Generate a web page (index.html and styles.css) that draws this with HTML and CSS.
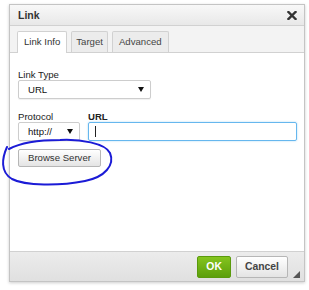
FILE: index.html
```html
<!DOCTYPE html>
<html lang="en">
<head>
    <meta charset="UTF-8">
    <meta name="viewport" content="width=device-width, initial-scale=1.0">
    <title>Link</title>
    <link rel="stylesheet" href="styles.css">
</head>
<body>
    <div class="dialog">
        <div class="dialog-title">
            <span>Link</span>
            <svg class="close" width="10" height="9" viewBox="0 0 10 9">
                <path d="M1.5 1 L8.5 8 M8.5 1 L1.5 8" stroke="#333" stroke-width="2.4" stroke-linecap="square"/>
            </svg>
        </div>

        <div class="tabs">
            <div class="tab active">Link Info</div>
            <div class="tab tab-narrow">Target</div>
            <div class="tab">Advanced</div>
        </div>

        <div class="dialog-body">
            <div class="label">Link Type</div>
            <div class="select select-type">
                <span>URL</span>
                <span class="arrow"></span>
            </div>

            <div class="url-row">
                <div class="field">
                    <div class="label">Protocol</div>
                    <div class="select select-protocol">
                        <span>http://</span>
                        <span class="arrow"></span>
                    </div>
                </div>
                <div class="field field-grow">
                    <div class="label label-bold">URL</div>
                    <div class="text-input"><span class="caret"></span></div>
                </div>
            </div>

            <div class="btn">Browse Server</div>
        </div>

        <div class="dialog-footer">
            <div class="btn btn-ok">OK</div>
            <div class="btn btn-cancel">Cancel</div>
            <span class="grip"></span>
        </div>
    </div>

    <!-- hand-drawn marker around the button -->
    <svg class="scribble" width="309" height="290" viewBox="0 0 309 290">
        <path d="M7 147 C2 158, 0 172, 12 179 C25 186, 60 186, 85 181 C105 177, 115 165, 110 153 C105 143, 80 139, 60 140 C40 140, 20 143, 9 149"
              fill="none" stroke="#1b1bd6" stroke-width="2" stroke-linecap="round"/>
    </svg>
</body>
</html>
```

FILE: styles.css
```css
body {
    margin: 0;
    background: #fff;
    font-family: "Liberation Sans", Arial, sans-serif;
    font-size: 9.6px;
    color: #222;
    position: relative;
    width: 309px;
    height: 290px;
    overflow: hidden;
}

.dialog {
    box-sizing: border-box;
    width: 296px;
    height: 278px;
    margin: 4px 0 0 9px;
    border: 1px solid #c4c4c4;
    box-shadow: 0 1px 3px rgba(0, 0, 0, 0.2);
    display: flex;
    flex-direction: column;
    background: #fff;
}

.dialog-title {
    box-sizing: border-box;
    height: 21px;
    padding: 0 7px 0 8px;
    display: flex;
    align-items: center;
    justify-content: space-between;
    background: linear-gradient(#f8f8f8, #e8e8e8);
    border-bottom: 1px solid #d1d1d1;
    font-size: 10.5px;
    font-weight: bold;
    line-height: 20px;
    color: #333;
}

.close {
    display: block;
    margin-top: 1px;
}

.tabs {
    display: flex;
    align-items: flex-end;
    gap: 4px;
    padding: 5px 0 0 7px;
    background: #f3f3f3;
    border-bottom: 1px solid #d1d1d1;
}

.tab {
    padding: 0 6px;
    line-height: 20px;
    border: 1px solid #d1d1d1;
    border-bottom: none;
    border-radius: 2px 2px 0 0;
    background: #ececec;
    color: #444;
}

.tab-narrow {
    padding: 0 4px;
}

.tab.active {
    background: #fff;
    padding-bottom: 1px;
    margin-bottom: -1px;
    color: #333;
}

.dialog-body {
    flex: 1;
    padding: 16px 7px 0 8px;
}

.label {
    line-height: 11px;
    color: #222;
}

.label-bold {
    font-weight: bold;
}

.select {
    box-sizing: border-box;
    height: 19px;
    display: flex;
    align-items: center;
    justify-content: space-between;
    padding: 0 6px 0 9px;
    border: 1px solid #cdcdcd;
    border-radius: 2px;
    background: #fff;
    box-shadow: 0 1px 1px rgba(0, 0, 0, 0.06);
    color: #111;
}

.select-type {
    width: 133px;
}

.select-protocol {
    width: 62px;
}

.arrow {
    width: 0;
    height: 0;
    border-left: 3px solid transparent;
    border-right: 3px solid transparent;
    border-top: 5px solid #111;
}

.url-row {
    display: flex;
    gap: 8px;
    margin-top: 12px;
}

.field-grow {
    flex: 1;
}

.text-input {
    box-sizing: border-box;
    height: 19px;
    padding: 3px 6px;
    border: 1px solid #66b7ee;
    border-radius: 2px;
    box-shadow: 0 0 2px rgba(102, 183, 238, 0.6);
}

.caret {
    display: block;
    width: 0;
    height: 11px;
    border-left: 1px solid #222;
}

.btn {
    display: inline-block;
    margin-top: 8px;
    padding: 0 9px;
    line-height: 16px;
    border: 1px solid #b6b6b6;
    border-radius: 2px;
    background: linear-gradient(#fff, #e4e4e4);
    color: #333;
}

.dialog-footer {
    height: 30px;
    box-sizing: border-box;
    display: flex;
    align-items: flex-start;
    justify-content: flex-end;
    gap: 5px;
    padding: 4px 4px 0 0;
    border-top: 1px solid #d1d1d1;
    background: linear-gradient(#ececec, #e0e0e0);
}

.dialog-footer .btn {
    margin-top: 0;
    padding: 0 8px;
    line-height: 20px;
    font-size: 10.4px;
    font-weight: bold;
}

.btn-ok {
    background: linear-gradient(#84c41e, #5c9f0b);
    border-color: #5a9a0c;
    color: #fff;
}

.btn-cancel {
    color: #444;
}

.grip {
    align-self: flex-end;
    margin-bottom: 3px;
    width: 0;
    height: 0;
    border-left: 7px solid transparent;
    border-bottom: 7px solid #555;
}

.scribble {
    position: absolute;
    top: 0;
    left: 0;
    pointer-events: none;
}
```
